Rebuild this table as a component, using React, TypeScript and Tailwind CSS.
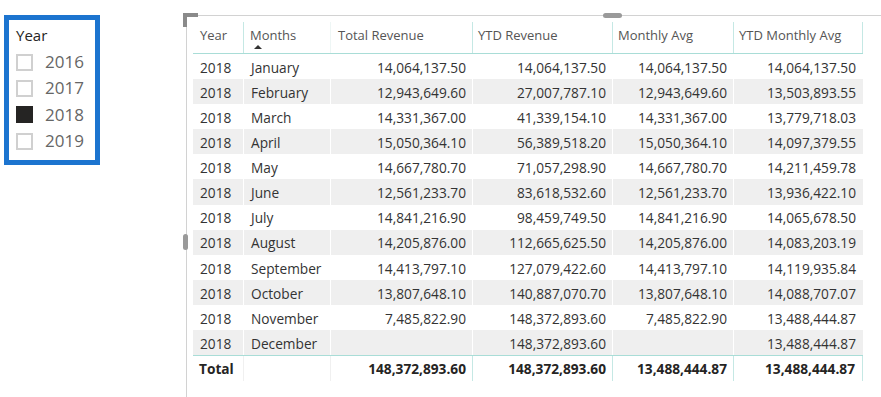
import React from "react"

const rows = [
  ["January", "14,064,137.50", "14,064,137.50", "14,064,137.50", "14,064,137.50"],
  ["February", "12,943,649.60", "27,007,787.10", "12,943,649.60", "13,503,893.55"],
  ["March", "14,331,367.00", "41,339,154.10", "14,331,367.00", "13,779,718.03"],
  ["April", "15,050,364.10", "56,389,518.20", "15,050,364.10", "14,097,379.55"],
  ["May", "14,667,780.70", "71,057,298.90", "14,667,780.70", "14,211,459.78"],
  ["June", "12,561,233.70", "83,618,532.60", "12,561,233.70", "13,936,422.10"],
  ["July", "14,841,216.90", "98,459,749.50", "14,841,216.90", "14,065,678.50"],
  ["August", "14,205,876.00", "112,665,625.50", "14,205,876.00", "14,083,203.19"],
  ["September", "14,413,797.10", "127,079,422.60", "14,413,797.10", "14,119,935.84"],
  ["October", "13,807,648.10", "140,887,070.70", "13,807,648.10", "14,088,707.07"],
  ["November", "7,485,822.90", "148,372,893.60", "7,485,822.90", "13,488,444.87"],
  ["December", "", "148,372,893.60", "", "13,488,444.87"],
]

const years = [
  { label: "2016", checked: false },
  { label: "2017", checked: false },
  { label: "2018", checked: true },
  { label: "2019", checked: false },
]

const cols = "grid grid-cols-[50px_87px_142px_140px_121px_130px]"

const App = () => {
  return (
    <div
      className="w-[881px] h-[397px] bg-white flex items-start overflow-hidden"
      style={{ fontFamily: '"Open Sans", "Noto Sans", sans-serif' }}
    >
      {/* Year slicer */}
      <div className="ml-[4px] mt-[15px] w-[96px] h-[150px] border-[5px] border-[#1c74cf] pl-[7px] pt-[5px]">
        <div className="text-[15px] text-[#252423] leading-[20px]">Year</div>
        <div className="flex flex-col mt-[4px]">
          {years.map((y) => (
            <div key={y.label} className="flex items-center h-[26.3px]">
              <div
                className={
                  y.checked
                    ? "w-[17px] h-[17px] bg-[#252423]"
                    : "w-[17px] h-[17px] border-2 border-[#d0d0d0]"
                }
              />
              <span className="ml-[12px] text-[17px] text-[#666666] leading-[20px]">{y.label}</span>
            </div>
          ))}
        </div>
      </div>

      {/* Table visual */}
      <div className="relative ml-[86px] mt-[15px] h-[382px] flex-1 border-l border-t border-[#d2d2d2] pl-[6px] pt-[6px]">
        {/* selection handles */}
        <div className="absolute -left-[4px] -top-[3px] w-[15px] h-[4px] bg-[#8a8a8a]" />
        <div className="absolute -left-[4px] -top-[3px] w-[4px] h-[14px] bg-[#8a8a8a]" />
        <div className="absolute left-[416px] -top-[3px] w-[19px] h-[5px] rounded-sm bg-[#9a9a9a]" />
        <div className="absolute -left-[4px] top-[218px] w-[5px] h-[16px] rounded-sm bg-[#9a9a9a]" />

        <div className="w-[670px] text-[#333333]">
          {/* header */}
          <div className={`${cols} h-[32px] border-b border-[#a9ddd7] text-[13px] text-[#555555]`}>
            <div className="pl-[7px] pt-[4px]">Year</div>
            <div className="relative border-l border-[#c5e8e4] pl-[6px] pt-[4px]">
              Months
              <svg className="absolute left-[10px] top-[23px]" width="8" height="4" viewBox="0 0 8 4">
                <path d="M0 4 L4 0 L8 4 Z" fill="#333" />
              </svg>
            </div>
            <div className="border-l border-[#eef6f5] pl-[7px] pt-[4px]">Total Revenue</div>
            <div className="border-l border-[#c5e8e4] pl-[5px] pt-[4px]">YTD Revenue</div>
            <div className="border-l border-[#c5e8e4] pl-[5px] pt-[4px]">Monthly Avg</div>
            <div className="border-l border-r border-[#c5e8e4] pl-[5px] pt-[4px]">YTD Monthly Avg</div>
          </div>

          {/* body */}
          <div className="text-[13.7px]">
            {rows.map((r, i) => (
              <div
                key={r[0]}
                className={`${cols} h-[25.1px] items-center ${i % 2 === 1 ? "bg-[#efefef]" : "bg-white"}`}
              >
                <div className="pl-[7px] h-full pt-[3px] flex items-center">2018</div>
                <div className="pl-[7px] pt-[3px] border-l border-white h-full flex items-center">{r[0]}</div>
                <div className="pr-[6px] pt-[3px] border-l border-white h-full flex items-center justify-end">{r[1]}</div>
                <div className="pr-[6px] pt-[3px] border-l border-white h-full flex items-center justify-end">{r[2]}</div>
                <div className="pr-[6px] pt-[3px] border-l border-white h-full flex items-center justify-end">{r[3]}</div>
                <div className="pr-[7px] pt-[3px] border-l border-white h-full flex items-center justify-end">{r[4]}</div>
              </div>
            ))}
          </div>

          {/* total */}
          <div className={`${cols} h-[26px] items-center border-t border-[#a9ddd7] font-bold text-[13.7px] text-[#252423]`}>
            <div className="pl-[6px] h-full pt-[2px] flex items-center">Total</div>
            <div className="h-full border-l border-[#f0f0f0]" />
            <div className="h-full pt-[2px] border-l border-[#f0f0f0] pr-[6px] flex items-center justify-end">148,372,893.60</div>
            <div className="h-full pt-[2px] border-l border-[#c5e8e4] pr-[6px] flex items-center justify-end">148,372,893.60</div>
            <div className="h-full pt-[2px] border-l border-[#c5e8e4] pr-[6px] flex items-center justify-end">13,488,444.87</div>
            <div className="h-full pt-[2px] border-l border-r border-[#c5e8e4] pr-[7px] flex items-center justify-end">13,488,444.87</div>
          </div>
        </div>
      </div>
    </div>
  )
}

export default App
